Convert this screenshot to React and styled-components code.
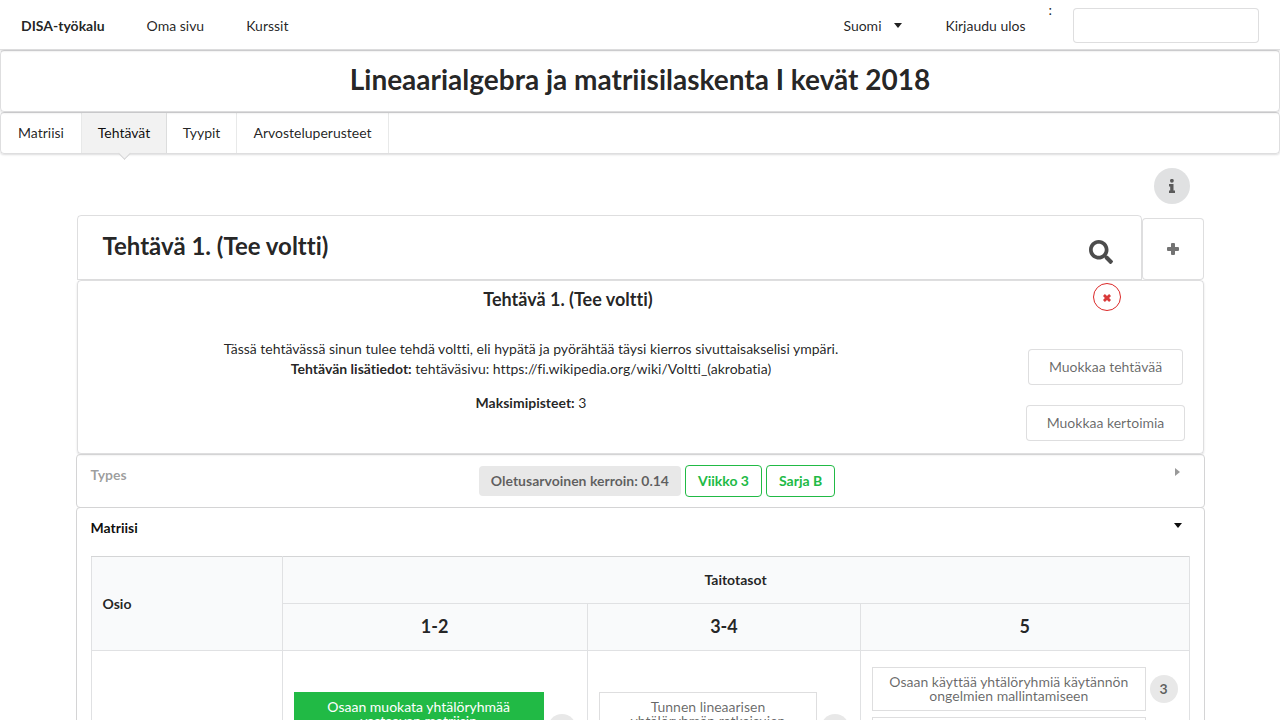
import React from "react";
import styled, { createGlobalStyle, css } from "styled-components";
import { FaSearch } from "react-icons/fa";

const line = "rgba(34, 36, 38, 0.15)";
const ink = "rgba(0, 0, 0, 0.87)";
const muted = "rgba(0, 0, 0, 0.6)";

const GlobalStyle = createGlobalStyle`
  *, *::before, *::after { box-sizing: border-box; }
  body {
    margin: 0;
    background: #fff;
    color: ${ink};
    font: 14px/20px Lato, "Liberation Sans", sans-serif;
    font-variant-ligatures: none;
    overflow-x: hidden;
  }
  h1, h2, h3, p { margin: 0; }
  button, input { font: inherit; font-variant-ligatures: none; }
`;

const TopBar = styled.nav`
  display: flex;
  height: 50px;
  border-bottom: 1px solid ${line};
  box-shadow: 0 1px 2px ${line};
`;

const TopItem = styled.a`
  display: flex;
  align-items: center;
  justify-content: center;
  gap: 12px;
  min-width: ${(p) => (p.$wide ? "126px" : "84px")};
  padding: 2px 21px 0;
  color: ${ink};
  text-decoration: none;
  font-weight: ${(p) => (p.$brand ? 700 : 400)};
`;

const TopRight = styled.div`
  display: flex;
  margin-left: auto;
`;

const Language = styled(TopItem).attrs({ as: "button", type: "button" })`
  background: none;
  border: 0;
  cursor: pointer;
`;

const SearchLabel = styled.label`
  color: ${ink};
`;

const TopInput = styled.input`
  width: 186px;
  height: 35px;
  margin: 8px 21px 0;
  padding: 0 14px;
  border: 1px solid ${line};
  border-radius: 4px;
  background: #fff;
`;

const Segment = styled.section`
  border: 1px solid ${line};
  border-radius: 4px;
  box-shadow: ${(p) => (p.$flat ? "none" : `0 1px 2px 0 ${line}`)};
`;

const CourseHeader = styled(Segment)`
  height: 62px;
  padding-top: 10px;
  text-align: center;
`;

const CourseTitle = styled.h1`
  font-size: 28px;
  line-height: 36px;
`;

const Tabs = styled(Segment).attrs({ as: "nav" })`
  display: flex;
  height: 42px;
`;

const Tab = styled.a`
  position: relative;
  display: flex;
  align-items: center;
  justify-content: center;
  min-width: ${(p) => p.$width}px;
  border-right: 1px solid rgba(34, 36, 38, 0.1);
  color: ${(p) => (p.$active ? "rgba(0, 0, 0, 0.95)" : ink)};
  text-decoration: none;
  ${(p) =>
    p.$active &&
    css`
      background: #f2f2f2;
      &::after {
        content: "";
        position: absolute;
        left: 50%;
        bottom: -5px;
        width: 9px;
        height: 9px;
        margin-left: -4px;
        background: #f2f2f2;
        border: solid #d4d4d5;
        border-width: 0 1px 1px 0;
        transform: rotate(45deg);
      }
    `}
`;

const Container = styled.main`
  width: calc(100% - 153px);
  max-width: 1127px;
  margin: 0 auto;
`;

const InfoRow = styled.div`
  display: flex;
  justify-content: flex-end;
  padding: 14px 14px 11px;
`;

const InfoButton = styled.button`
  display: grid;
  place-items: center;
  width: 36px;
  height: 36px;
  padding: 0;
  border: 0;
  border-radius: 50%;
  background: #e0e1e2;
  color: ${muted};
`;

const TaskBar = styled.div`
  display: flex;
  align-items: flex-end;
`;

const TaskPicker = styled(Segment)`
  display: flex;
  flex: 1;
  justify-content: space-between;
  height: 65px;
  padding: 14px 28px 0 25px;
  border-radius: 4px 4px 0 0;
`;

const TaskTitle = styled.h2`
  font-size: 24px;
  line-height: 32px;
`;

const PickerButton = styled.button`
  display: grid;
  width: 24px;
  height: 24px;
  margin-top: 10px;
  padding: 0;
  border: 0;
  background: none;
  color: rgba(0, 0, 0, 0.7);
`;

const AddButton = styled.button`
  display: grid;
  place-items: center;
  width: 62px;
  height: 62px;
  border: 1px solid ${line};
  border-radius: 4px;
  background: #fff;
  color: rgba(0, 0, 0, 0.55);
`;

const Detail = styled(Segment)`
  display: grid;
  grid-template-columns: 1fr 294px;
  grid-template-rows: 56px 1fr;
  height: 174px;
`;

const DetailHead = styled.header`
  grid-column: 1 / -1;
  display: flex;
  align-items: flex-start;
  padding: 2px 82px 0 0;
`;

const DetailName = styled.h3`
  flex: 1;
  padding: 4px 34px 0 0;
  font-size: 18px;
  line-height: 24px;
  text-align: center;
`;

const DeleteButton = styled.button`
  display: grid;
  place-items: center;
  width: 28px;
  height: 28px;
  padding: 1px 0 0;
  border: 1px solid #db2828;
  border-radius: 50%;
  background: #fff;
  color: #d93a3a;
`;

const Description = styled.div`
  padding: 2px 0 0 76px;
  text-align: center;
  p + p { margin-top: 14px; }
`;

const Actions = styled.div`
  display: flex;
  flex-direction: column;
  align-items: center;
  gap: 20px;
  padding: 12px 0 0 100px;
`;

const BasicButton = styled.button`
  height: 36px;
  padding: 0 20px;
  border: 1px solid ${line};
  border-radius: 4px;
  background: #fff;
  color: ${muted};
  white-space: nowrap;
`;

const Accordion = styled.section`
  margin: 0 -1px;
  padding: 10px 14px;
  border: 1px solid #d4d4d5;
  border-radius: 4px;
  & + & { margin-top: -1px; }
`;

const AccordionHead = styled.header`
  display: grid;
  grid-template-columns: 1fr auto 1fr;
  align-items: start;
`;

const AccordionTitle = styled.h3`
  font-size: 14px;
  line-height: 20px;
  color: ${(p) => (p.$open ? "rgba(0, 0, 0, 0.95)" : "rgba(0, 0, 0, 0.4)")};
`;

const Toggle = styled.button`
  grid-column: 3;
  justify-self: end;
  display: grid;
  place-items: center;
  width: 24px;
  height: 14px;
  padding: 0;
  border: 0;
  background: none;
  color: ${(p) => (p.$open ? "rgba(0, 0, 0, 0.95)" : "rgba(0, 0, 0, 0.4)")};
`;

const Labels = styled.div`
  display: flex;
  align-items: center;
  gap: 4px;
  padding-left: 34px;
`;

const Label = styled.span`
  display: flex;
  align-items: center;
  height: ${(p) => (p.$green ? "32px" : "30px")};
  padding: 0 12px;
  border: ${(p) => (p.$green ? "1px solid #21ba45" : "0")};
  border-radius: 4px;
  background: ${(p) => (p.$green ? "#fff" : "#e8e8e8")};
  color: ${(p) => (p.$green ? "#21ba45" : muted)};
  font-weight: 700;
`;

const Matrix = styled.table`
  width: 100%;
  margin-top: 18px;
  border-collapse: collapse;
  table-layout: fixed;
  th, td { border: 1px solid #e0e1e3; }
  th {
    height: 47px;
    padding: 0 11px;
    background: #f9fafb;
  }
  thead tr:first-child th { border-top-color: #d4d5d6; }
  td { padding: 16px 11px; }
`;

const Column = styled.col`
  width: ${(p) => p.$share}%;
`;

const AreaHead = styled.th`
  text-align: left;
`;

const LevelName = styled.span`
  display: block;
  padding-bottom: 2px;
  font-size: 18px;
`;

const Objectives = styled.div`
  display: flex;
  flex-direction: column;
  gap: 6px;
`;

const ObjectiveRow = styled.div`
  display: flex;
  align-items: center;
  gap: 4px;
`;

const Objective = styled.button`
  display: flex;
  flex: 1;
  justify-content: center;
  min-height: ${(p) => (p.$tall ? "72px" : "44px")};
  padding: 7px 14px;
  border: 1px solid ${(p) => (p.$chosen ? "#21ba45" : line)};
  background: ${(p) => (p.$chosen ? "#21ba45" : "#fff")};
  color: ${(p) => (p.$chosen ? "#fff" : muted)};
  line-height: 14px;
`;

const Count = styled.span`
  display: grid;
  place-items: center;
  width: 28px;
  height: 28px;
  border-radius: 50%;
  background: #e8e8e8;
  color: ${muted};
  font-weight: 700;
`;

const glyphs = {
  down: [8, 5, "M0 0h8L4 5z"],
  right: [5, 8, "M0 0v8l5-4z"],
  plus: [12, 12, "M5 0h2q1 0 1 1v3h3q1 0 1 1v2q0 1-1 1H8v3q0 1-1 1H5q-1 0-1-1V8H1q-1 0-1-1V5q0-1 1-1h3V1q0-1 1-1z"],
  cross: [8, 8, "M1.9 0 4 1.9 6.1 0 8 1.9 6.1 4 8 6.1 6.1 8 4 6.1 1.9 8 0 6.1 1.9 4 0 1.9z"],
  info: [6, 14, "M1 1.8a1.9 1.9 0 1 0 3.8 0 1.9 1.9 0 1 0-3.8 0M0 5h4.5v6.5H6V14H0v-2.5h1.2v-4H0z"],
};

function Glyph({ name }) {
  const [w, h, d] = glyphs[name];
  return (
    <svg width={w} height={h} viewBox={`0 0 ${w} ${h}`} fill="currentColor" aria-hidden="true">
      <path d={d} />
    </svg>
  );
}

const levels = [
  {
    name: "1-2",
    objectives: [{ id: 1, text: "Osaan muokata yhtälöryhmää vastaavan matriisin", chosen: true, tall: true }],
  },
  {
    name: "3-4",
    objectives: [{ id: 2, text: "Tunnen lineaarisen yhtälöryhmän ratkaisujen", tall: true }],
  },
  {
    name: "5",
    objectives: [
      { id: 3, text: "Osaan käyttää yhtälöryhmiä käytännön ongelmien mallintamiseen", count: 3 },
      { id: 4, tall: true },
    ],
  },
];

export default function App() {
  return (
    <>
      <GlobalStyle />
      <TopBar>
        <TopItem href="#" $brand>DISA-työkalu</TopItem>
        <TopItem href="#">Oma sivu</TopItem>
        <TopItem href="#">Kurssit</TopItem>
        <TopRight>
          <Language>Suomi <Glyph name="down" /></Language>
          <TopItem href="#" $wide>Kirjaudu ulos</TopItem>
          <SearchLabel htmlFor="user">:</SearchLabel>
          <TopInput id="user" type="text" />
        </TopRight>
      </TopBar>
      <CourseHeader>
        <CourseTitle>Lineaarialgebra ja matriisilaskenta I kevät 2018</CourseTitle>
      </CourseHeader>
      <Tabs>
        <Tab href="#" $width={81}>Matriisi</Tab>
        <Tab href="#" $width={85} $active>Tehtävät</Tab>
        <Tab href="#" $width={70}>Tyypit</Tab>
        <Tab href="#" $width={152}>Arvosteluperusteet</Tab>
      </Tabs>
      <Container>
        <InfoRow>
          <InfoButton type="button" aria-label="Info"><Glyph name="info" /></InfoButton>
        </InfoRow>
        <TaskBar>
          <TaskPicker $flat>
            <TaskTitle>Tehtävä 1. (Tee voltti)</TaskTitle>
            <PickerButton type="button" aria-label="Hae"><FaSearch size={24} /></PickerButton>
          </TaskPicker>
          <AddButton type="button" aria-label="Lisää"><Glyph name="plus" /></AddButton>
        </TaskBar>
        <Detail>
          <DetailHead>
            <DetailName>Tehtävä 1. (Tee voltti)</DetailName>
            <DeleteButton type="button" aria-label="Poista"><Glyph name="cross" /></DeleteButton>
          </DetailHead>
          <Description>
            <p>
              Tässä tehtävässä sinun tulee tehdä voltti, eli hypätä ja pyörähtää täysi kierros sivuttaisakselisi ympäri.
              <br />
              <strong>Tehtävän lisätiedot:</strong> tehtäväsivu: https://fi.wikipedia.org/wiki/Voltti_(akrobatia)
            </p>
            <p><strong>Maksimipisteet:</strong> 3</p>
          </Description>
          <Actions>
            <BasicButton type="button">Muokkaa tehtävää</BasicButton>
            <BasicButton type="button">Muokkaa kertoimia</BasicButton>
          </Actions>
        </Detail>
        <Accordion>
          <AccordionHead>
            <AccordionTitle>Types</AccordionTitle>
            <Labels>
              <Label>Oletusarvoinen kerroin: 0.14</Label>
              <Label $green>Viikko 3</Label>
              <Label $green>Sarja B</Label>
            </Labels>
            <Toggle type="button" aria-label="Avaa"><Glyph name="right" /></Toggle>
          </AccordionHead>
        </Accordion>
        <Accordion>
          <AccordionHead>
            <AccordionTitle $open>Matriisi</AccordionTitle>
            <Toggle type="button" aria-label="Sulje" $open><Glyph name="down" /></Toggle>
          </AccordionHead>
          <Matrix>
            <colgroup>
              <Column $share={17.4} />
              <Column $share={27.8} />
              <Column $share={24.9} />
              <Column $share={29.9} />
            </colgroup>
            <thead>
              <tr>
                <AreaHead rowSpan={2}>Osio</AreaHead>
                <th colSpan={3}>Taitotasot</th>
              </tr>
              <tr>
                {levels.map((l) => (
                  <th key={l.name}><LevelName>{l.name}</LevelName></th>
                ))}
              </tr>
            </thead>
            <tbody>
              <tr>
                <td />
                {levels.map((l) => (
                  <td key={l.name}>
                    <Objectives>
                      {l.objectives.map((o) => (
                        <ObjectiveRow key={o.id}>
                          <Objective type="button" $chosen={o.chosen} $tall={o.tall}>{o.text}</Objective>
                          <Count>{o.count}</Count>
                        </ObjectiveRow>
                      ))}
                    </Objectives>
                  </td>
                ))}
              </tr>
            </tbody>
          </Matrix>
        </Accordion>
      </Container>
    </>
  );
}
